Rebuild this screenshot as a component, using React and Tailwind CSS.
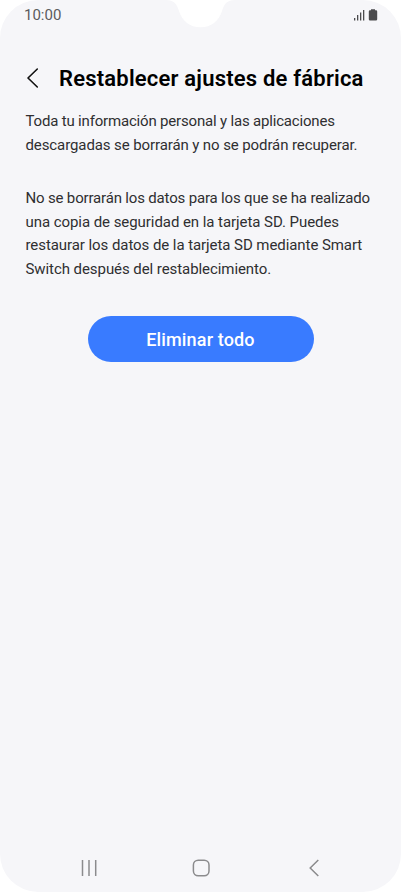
import React from 'react';

const intro = [
    { text: 'Toda tu información personal y las aplicaciones', tracking: 'tracking-[-0.18px]' },
    { text: 'descargadas se borrarán y no se podrán recuperar.', tracking: 'tracking-[-0.1px]' },
];

const details = [
    { text: 'No se borrarán los datos para los que se ha realizado', tracking: 'tracking-[-0.17px]' },
    { text: 'una copia de seguridad en la tarjeta SD. Puedes', tracking: 'tracking-[-0.06px]' },
    { text: 'restaurar los datos de la tarjeta SD mediante Smart', tracking: 'tracking-[-0.07px]' },
    { text: 'Switch después del restablecimiento.', tracking: 'tracking-[-0.07px]' },
];

function Paragraph({ lines, className }) {
    return (
        <p className={`text-[15px] leading-[23.5px] text-[#2f2f31] whitespace-nowrap ${className}`}>
            {lines.map((line) => (
                <span key={line.text} className={`block ${line.tracking}`}>{line.text}</span>
            ))}
        </p>
    );
}

function StatusBar() {
    return (
        <div className="relative h-[31px] flex items-start justify-between pl-6 pr-[23px]">
            <span className="pt-[5px] text-[15px] leading-5 text-[#5b5b5d]">10:00</span>
            {/* Camera notch */}
            <svg className="absolute left-[166px] top-0" width="70" height="28" viewBox="0 0 70 28" fill="#fff">
                <path d="M0 0C9 0 11 5 13 11C16 21 24 27.300 34.500 27.300C45 27.300 53 21 56 11C58 5 60 0 69 0Z" />
            </svg>
            <svg className="mt-[9px]" width="25" height="12" viewBox="0 0 25 12" fill="#4b4b4d">
                <rect x="1" y="9" width="1.300" height="2.500" />
                <rect x="4" y="6" width="1.300" height="5.500" />
                <rect x="7" y="3.500" width="1.300" height="8" />
                <rect x="10" y="1" width="1.300" height="10.500" />
                <path d="M18 0.300H22V1.300H23Q24.200 1.300 24.200 2.500V10.300Q24.200 11.500 23 11.500H17Q15.800 11.500 15.800 10.300V2.500Q15.800 1.300 17 1.300H18Z" />
            </svg>
        </div>
    );
}

function NavBar() {
    return (
        <div className="mt-auto h-12 flex items-center pl-[81px] text-[#8b8b8d]">
            <svg width="16" height="18" viewBox="0 0 16 18" stroke="currentColor" strokeWidth="1.500">
                <path d="M1.500 1V17M8 1V17M14.700 1V17" />
            </svg>
            <svg className="ml-[95px]" width="18" height="18" viewBox="0 0 18 18" fill="none" stroke="currentColor" strokeWidth="1.500">
                <rect x="1.400" y="1.200" width="15.600" height="15.600" rx="4.800" />
            </svg>
            <svg className="ml-[98px]" width="12" height="18" viewBox="0 0 12 18" fill="none" stroke="currentColor" strokeWidth="1.500">
                <path d="M10.300 1L2.200 9L10.300 17" />
            </svg>
        </div>
    );
}

export default function App() {
    return (
        <div className="w-[401px] h-[892px] bg-white font-[Roboto,sans-serif]">
            <div className="h-full flex flex-col overflow-hidden rounded-[38px] bg-[#f6f6f9]">
                <StatusBar />
                <header className="mt-[31px] h-8 flex items-center pl-[26px]">
                    <svg className="-mt-px" width="13" height="20" viewBox="0 0 13 20" fill="none" stroke="#111" strokeWidth="1.600" strokeLinecap="round" strokeLinejoin="round">
                        <path d="M11.300 1L2 10L11.300 19" />
                    </svg>
                    <h1 className="mt-0.5 ml-5 text-[22px] leading-8 tracking-[0.2px] font-semibold text-black whitespace-nowrap">
                        Restablecer ajustes de fábrica
                    </h1>
                </header>
                <main className="flex flex-col pl-[25.5px] pr-[25.5px]">
                    <Paragraph lines={intro} className="mt-4" />
                    <Paragraph lines={details} className="mt-[30px]" />
                    <button className="mt-[35px] w-[226px] h-[46px] self-center rounded-full bg-[#397bff] text-white text-[18px] tracking-[0.15px] font-medium">
                        Eliminar todo
                    </button>
                </main>
                <NavBar />
            </div>
        </div>
    );
}
